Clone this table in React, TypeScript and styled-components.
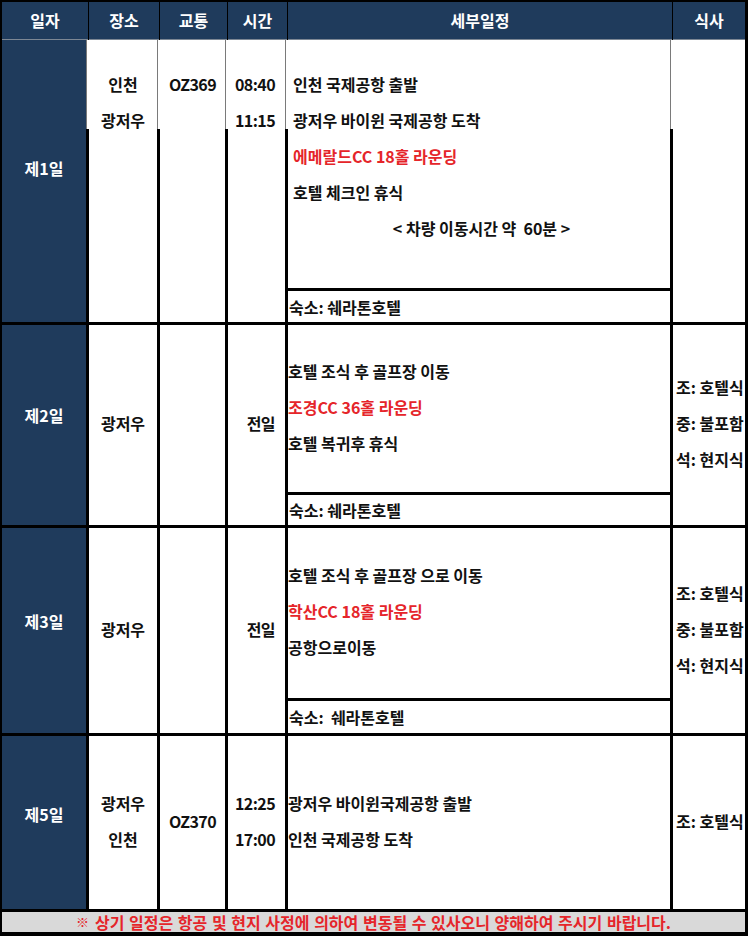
import React from "react";
import styled, { createGlobalStyle, css } from "styled-components";

interface Line {
  text: string;
  red?: boolean;
  center?: boolean;
}

interface Day {
  label: string;
  place: string[];
  transport: string[];
  time: string[];
  schedule: Line[];
  stay?: string;
  meal: string[];
  top?: boolean; // day 1 is written from the top of the cell
  lift: number;
}

const NAVY = "#1f3b5c";
const RED = "#e5252a";

const GlobalStyle = createGlobalStyle`
  html, body {
    margin: 0;
    padding: 0;
    background: #fff;
  }
  body {
    font-family: "Noto Sans CJK KR", "Noto Sans", sans-serif;
  }
`;

// the whole sheet: black background shows through the gaps as cell borders
const Sheet = styled.div`
  width: 748px;
  height: 936px;
  box-sizing: border-box;
  display: grid;
  grid-template-columns: 84px 68px 65px 57px 382px 72px;
  grid-template-rows: 35px 248px 31px 167px 30px 170px 32px 173px 20px;
  gap: 3px;
  padding: 2px 3px 4px 2px;
  background: #000;
  font-family: "Noto Sans CJK KR", "Noto Sans", sans-serif;
  font-weight: 700;
  font-size: 16px;
  color: #111;
`;

// upper part of day 1 was drawn with thin grey rules in the original sheet
const thinRule = css`
  position: relative;
  &::before {
    content: "";
    position: absolute;
    left: -3px;
    top: 0;
    width: 3px;
    height: 89px;
    background: linear-gradient(to right, #7a7a7a 0 1px, #fff 1px);
  }
`;

const HeadCell = styled.div<{ $last?: boolean }>`
  background: ${NAVY};
  color: #fff;
  display: flex;
  align-items: center;
  justify-content: center;
  margin-bottom: -3px;
  margin-right: ${({ $last }) => ($last ? "0" : "-2px")};
  border-bottom: 1px solid #7d8794;
  padding-bottom: 1px;
`;

const DayCell = styled.div<{ $rows: number; $lift: number }>`
  grid-row: span ${({ $rows }) => $rows};
  background: ${NAVY};
  color: #fff;
  display: flex;
  align-items: center;
  justify-content: center;
  padding-bottom: ${({ $lift }) => $lift}px;
`;

const Cell = styled.div<{
  $rows: number;
  $top?: boolean;
  $align?: "left" | "center" | "right";
  $tight?: boolean;
}>`
  grid-row: span ${({ $rows }) => $rows};
  background: #fff;
  display: flex;
  flex-direction: column;
  justify-content: ${({ $top }) => ($top ? "flex-start" : "center")};
  align-items: ${({ $align }) =>
    $align === "left" ? "flex-start" : $align === "right" ? "flex-end" : "center"};
  padding-top: ${({ $top }) => ($top ? "26px" : "0")};
  padding-left: ${({ $align }) => ($align === "left" ? "3px" : "0")};
  padding-right: ${({ $align }) => ($align === "right" ? "10px" : "0")};
  padding-bottom: ${({ $top }) => ($top ? "0" : "4px")};
  letter-spacing: ${({ $tight }) => ($tight ? "-0.6px" : "normal")};
  ${({ $top }) => $top && thinRule}
`;

const Schedule = styled.div<{ $top?: boolean }>`
  background: #fff;
  display: flex;
  flex-direction: column;
  justify-content: ${({ $top }) => ($top ? "flex-start" : "center")};
  padding-top: ${({ $top }) => ($top ? "26px" : "0")};
  padding-left: ${({ $top }) => ($top ? "5px" : "0")};
  padding-bottom: ${({ $top }) => ($top ? "0" : "4px")};
  ${({ $top }) => $top && thinRule}
`;

const Text = styled.div<{ $red?: boolean; $center?: boolean }>`
  line-height: 36px;
  white-space: pre;
  color: ${({ $red }) => ($red ? RED : "#111")};
  align-self: ${({ $center }) => ($center ? "center" : "auto")};
`;

const Stay = styled.div`
  background: #fff;
  display: flex;
  align-items: center;
  padding-left: 1px;
  white-space: pre;
`;

const Footer = styled.div`
  grid-column: 1 / -1;
  background: #d9d9d9;
  color: ${RED};
  display: flex;
  align-items: center;
  justify-content: center;
  line-height: 20px;
  white-space: pre;
  word-spacing: 1px;
`;

const Mark = styled.span`
  font-size: 13px;
  margin-right: 6px;
`;

const headers = ["일자", "장소", "교통", "시간", "세부일정", "식사"];

const days: Day[] = [
  {
    label: "제1일",
    place: ["인천", "광저우"],
    transport: ["OZ369"],
    time: ["08:40", "11:15"],
    schedule: [
      { text: "인천 국제공항 출발" },
      { text: "광저우 바이윈 국제공항 도착" },
      { text: "에메랄드CC 18홀 라운딩", red: true },
      { text: "호텔 체크인 휴식" },
      { text: "< 차량 이동시간 약  60분 >", center: true },
    ],
    stay: "숙소: 쉐라톤호텔",
    meal: [],
    top: true,
    lift: 26,
  },
  {
    label: "제2일",
    place: ["광저우"],
    transport: [],
    time: ["전일"],
    schedule: [
      { text: "호텔 조식 후 골프장 이동" },
      { text: "조경CC 36홀 라운딩", red: true },
      { text: "호텔 복귀후 휴식" },
    ],
    stay: "숙소: 쉐라톤호텔",
    meal: ["조: 호텔식", "중: 불포함", "석: 현지식"],
    lift: 20,
  },
  {
    label: "제3일",
    place: ["광저우"],
    transport: [],
    time: ["전일"],
    schedule: [
      { text: "호텔 조식 후 골프장 으로 이동" },
      { text: "학산CC 18홀 라운딩", red: true },
      { text: "공항으로이동" },
    ],
    stay: "숙소:  쉐라톤호텔",
    meal: ["조: 호텔식", "중: 불포함", "석: 현지식"],
    lift: 20,
  },
  {
    label: "제5일",
    place: ["광저우", "인천"],
    transport: ["OZ370"],
    time: ["12:25", "17:00"],
    schedule: [
      { text: "광저우 바이윈국제공항 출발" },
      { text: "인천 국제공항 도착" },
    ],
    meal: ["조: 호텔식"],
    lift: 18,
  },
];

const Lines: React.FC<{ items: string[] }> = ({ items }) => (
  <>
    {items.map((t, i) => (
      <Text key={i}>{t}</Text>
    ))}
  </>
);

const App: React.FC = () => {
  return (
    <>
      <GlobalStyle />
      <Sheet>
        {headers.map((h, i) => (
          <HeadCell key={h} $last={i === headers.length - 1}>
            {h}
          </HeadCell>
        ))}

        {days.map((d) => {
          const rows = d.stay ? 2 : 1;
          return (
            <React.Fragment key={d.label}>
              <DayCell $rows={rows} $lift={d.lift}>
                {d.label}
              </DayCell>
              <Cell $rows={rows} $top={d.top}>
                <Lines items={d.place} />
              </Cell>
              <Cell $rows={rows} $top={d.top} $tight>
                <Lines items={d.transport} />
              </Cell>
              <Cell $rows={rows} $top={d.top} $align="right" $tight>
                <Lines items={d.time} />
              </Cell>
              <Schedule $top={d.top}>
                {d.schedule.map((l, i) => (
                  <Text key={i} $red={l.red} $center={l.center}>
                    {l.text}
                  </Text>
                ))}
              </Schedule>
              <Cell $rows={rows} $top={d.top} $align="left">
                <Lines items={d.meal} />
              </Cell>
              {d.stay && <Stay>{d.stay}</Stay>}
            </React.Fragment>
          );
        })}

        <Footer>
          <Mark>※</Mark>
          상기 일정은 항공 및 현지 사정에 의하여 변동될 수 있사오니 양해하여 주시기 바랍니다.
        </Footer>
      </Sheet>
    </>
  );
};

export default App;
